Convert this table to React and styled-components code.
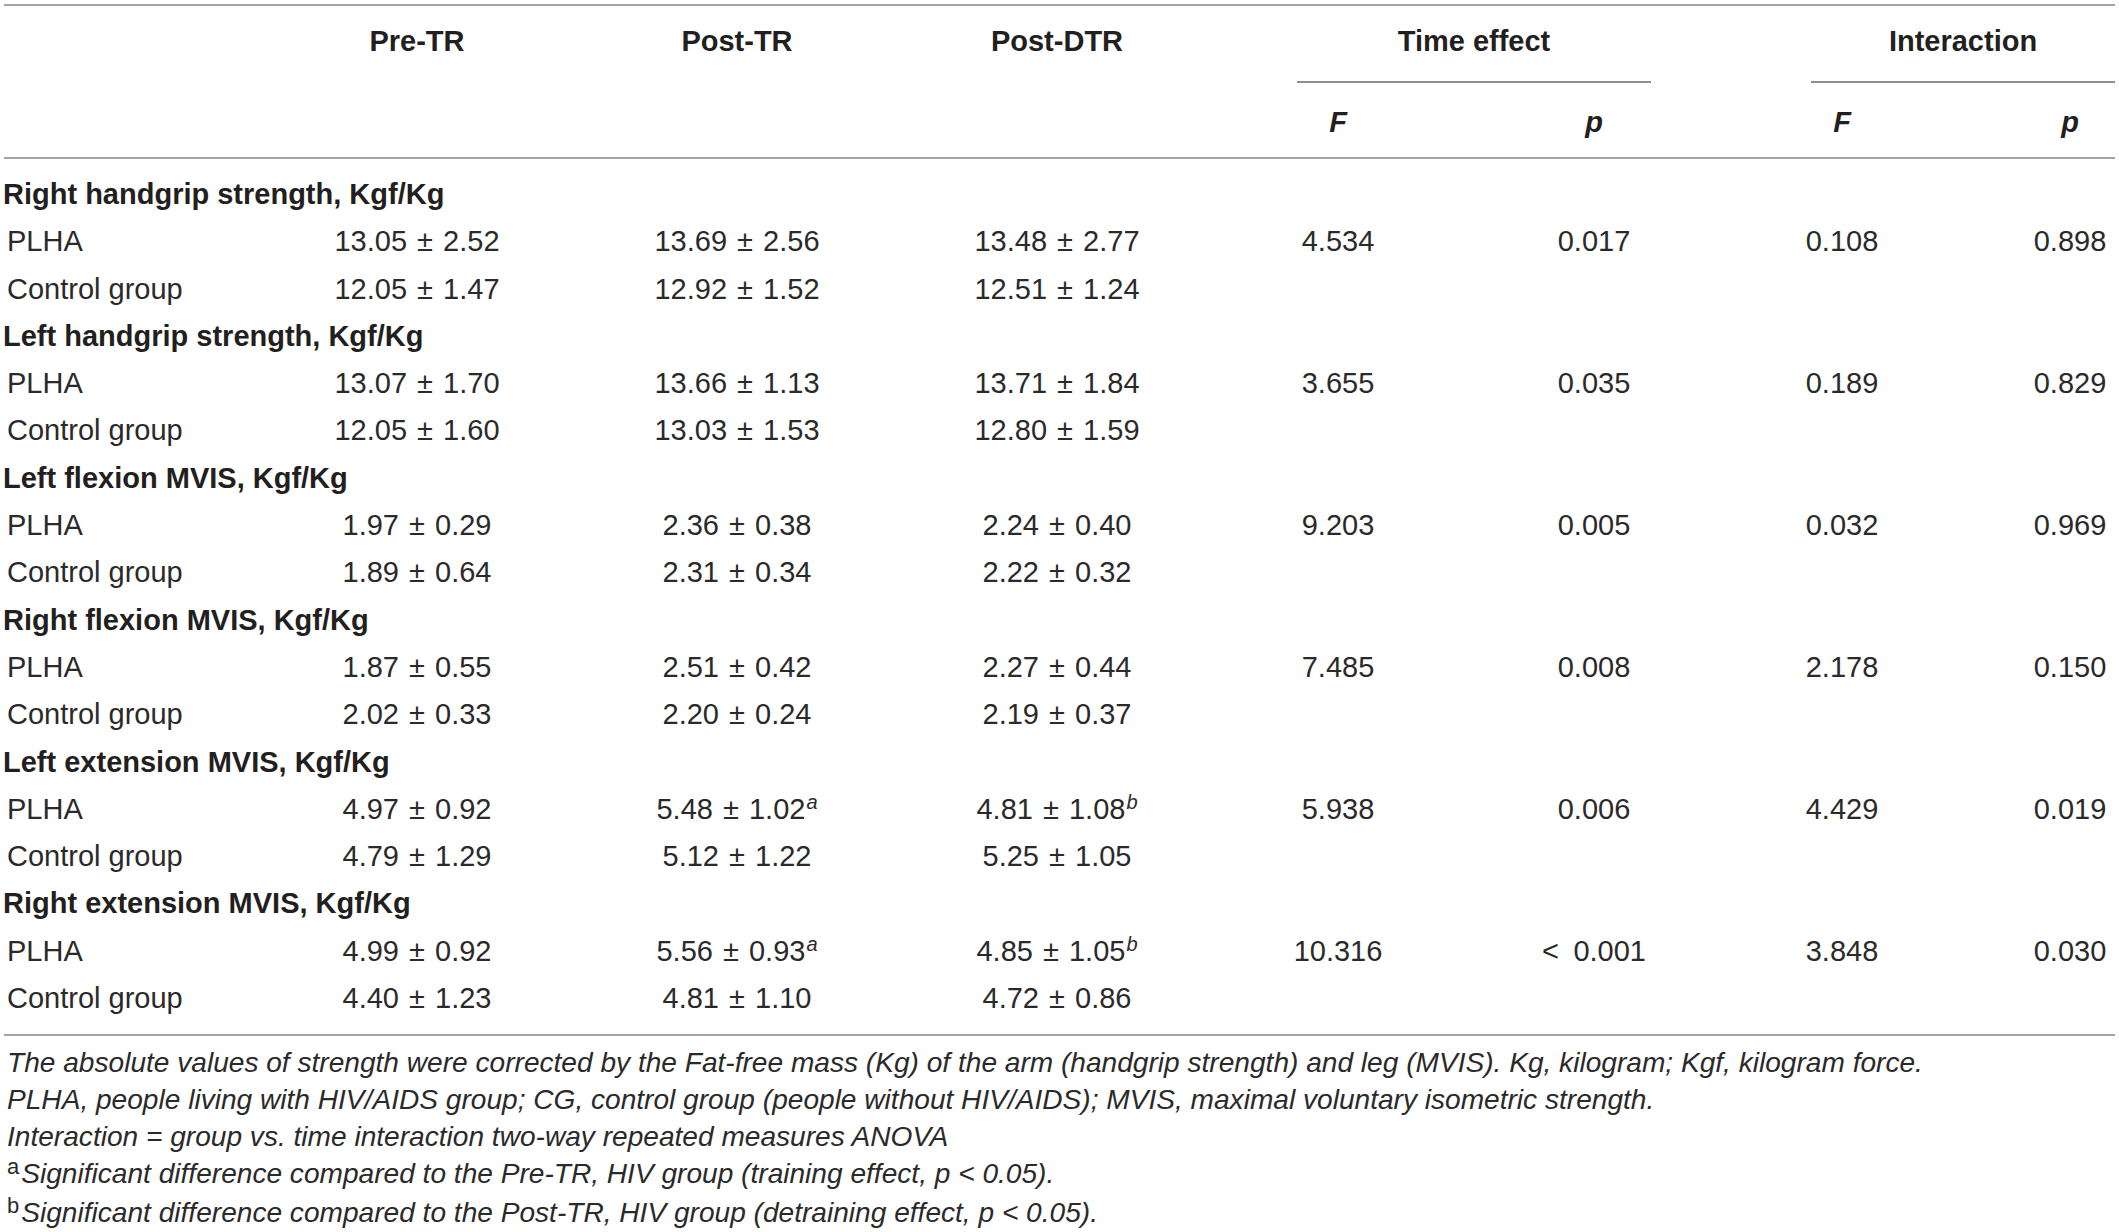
import React from "react";
import styled, { createGlobalStyle } from "styled-components";

const COLS = "257px 320px 320px 320px 242px 270px 226px 164px";

const GlobalStyle = createGlobalStyle`
  html, body {
    margin: 0;
    padding: 0;
    background: #ffffff;
  }
  body {
    font-family: "Liberation Sans", Arial, Helvetica, sans-serif;
    color: #2b2a2a;
  }
`;

const Page = styled.div`
  width: 2119px;
  padding-top: 4px;
`;

const Rule = styled.div`
  height: 2px;
  margin: 0 4px;
  background: #a3a3a3;
`;

const Head = styled.div`
  display: grid;
  grid-template-columns: ${COLS};
  grid-template-rows: 77px 74px;
  font-size: 29px;
  line-height: 32px;
  font-weight: 700;
  color: #231f20;
`;

const ColTitle = styled.div`
  grid-column: ${(p) => p.$col};
  grid-row: 1 / span 2;
  padding-top: 19px;
  text-align: center;
`;

const GroupTitle = styled.div`
  grid-column: ${(p) => p.$col} / span 2;
  grid-row: 1;
  margin: 0 ${(p) => p.$mr}px 0 ${(p) => p.$ml}px;
  padding-top: 19px;
  border-bottom: 2px solid #8f8f8f;
  text-align: center;
`;

const StatTitle = styled.div`
  grid-column: ${(p) => p.$col};
  grid-row: 2;
  padding-top: 23px;
  padding-left: ${(p) => p.$pad || 0}px;
  text-align: center;
  font-style: italic;
`;

const Body = styled.div`
  display: grid;
  grid-template-columns: ${COLS};
  grid-auto-rows: 47.3px;
  padding: 12px 0 11.6px;
  font-size: 29px;
  line-height: 47.3px;
`;

const SectionTitle = styled.div`
  grid-column: 1 / -1;
  padding-left: 3px;
  font-weight: 700;
  color: #231f20;
  white-space: nowrap;
`;

const Label = styled.div`
  padding-left: 7px;
  white-space: nowrap;
`;

const Value = styled.div`
  padding-left: ${(p) => p.$pad || 0}px;
  text-align: center;
  white-space: nowrap;
  word-spacing: 2px;
`;

const Sup = styled.sup`
  font-size: 20px;
  font-style: italic;
  line-height: 0;
  vertical-align: 0;
  position: relative;
  top: -10px;
  margin-left: 1px;
`;

const Notes = styled.div`
  padding: 8px 0 0 7px;
  font-size: 28.1px;
  line-height: 37px;
  font-style: italic;
`;

const NoteLine = styled.div`
  white-space: nowrap;
`;

const NoteMark = styled.span`
  font-style: normal;
  font-size: 22px;
  position: relative;
  top: -9px;
  margin-right: 2px;
`;

const sections = [
  {
    title: "Right handgrip strength, Kgf/Kg",
    rows: [
      ["PLHA", "13.05 ± 2.52", "13.69 ± 2.56", "13.48 ± 2.77", "4.534", "0.017", "0.108", "0.898"],
      ["Control group", "12.05 ± 1.47", "12.92 ± 1.52", "12.51 ± 1.24"],
    ],
  },
  {
    title: "Left handgrip strength, Kgf/Kg",
    rows: [
      ["PLHA", "13.07 ± 1.70", "13.66 ± 1.13", "13.71 ± 1.84", "3.655", "0.035", "0.189", "0.829"],
      ["Control group", "12.05 ± 1.60", "13.03 ± 1.53", "12.80 ± 1.59"],
    ],
  },
  {
    title: "Left flexion MVIS, Kgf/Kg",
    rows: [
      ["PLHA", "1.97 ± 0.29", "2.36 ± 0.38", "2.24 ± 0.40", "9.203", "0.005", "0.032", "0.969"],
      ["Control group", "1.89 ± 0.64", "2.31 ± 0.34", "2.22 ± 0.32"],
    ],
  },
  {
    title: "Right flexion MVIS, Kgf/Kg",
    rows: [
      ["PLHA", "1.87 ± 0.55", "2.51 ± 0.42", "2.27 ± 0.44", "7.485", "0.008", "2.178", "0.150"],
      ["Control group", "2.02 ± 0.33", "2.20 ± 0.24", "2.19 ± 0.37"],
    ],
  },
  {
    title: "Left extension MVIS, Kgf/Kg",
    rows: [
      ["PLHA", "4.97 ± 0.92", ["5.48 ± 1.02", "a"], ["4.81 ± 1.08", "b"], "5.938", "0.006", "4.429", "0.019"],
      ["Control group", "4.79 ± 1.29", "5.12 ± 1.22", "5.25 ± 1.05"],
    ],
  },
  {
    title: "Right extension MVIS, Kgf/Kg",
    rows: [
      ["PLHA", "4.99 ± 0.92", ["5.56 ± 0.93", "a"], ["4.85 ± 1.05", "b"], "10.316", "<\u20020.001", "3.848", "0.030"],
      ["Control group", "4.40 ± 1.23", "4.81 ± 1.10", "4.72 ± 0.86"],
    ],
  },
];

// last column sits off-centre, nudged right
const pads = [0, 0, 0, 0, 0, 0, 66];

function Cell({ value, idx }) {
  if (Array.isArray(value)) {
    return (
      <Value $pad={pads[idx]}>
        {value[0]}
        <Sup>{value[1]}</Sup>
      </Value>
    );
  }
  return <Value $pad={pads[idx]}>{value}</Value>;
}

function Row({ cells }) {
  const [label, ...values] = cells;
  const filled = [...values, ...Array(7 - values.length).fill("")];
  return (
    <>
      <Label>{label}</Label>
      {filled.map((v, i) => (
        <Cell key={i} value={v} idx={i} />
      ))}
    </>
  );
}

export default function App() {
  return (
    <Page>
      <GlobalStyle />
      <Rule />
      <Head>
        <ColTitle $col={2}>Pre-TR</ColTitle>
        <ColTitle $col={3}>Post-TR</ColTitle>
        <ColTitle $col={4}>Post-DTR</ColTitle>
        <GroupTitle $col={5} $ml={80} $mr={78}>Time effect</GroupTitle>
        <GroupTitle $col={7} $ml={82} $mr={4}>Interaction</GroupTitle>
        <StatTitle $col={5}>F</StatTitle>
        <StatTitle $col={6}>p</StatTitle>
        <StatTitle $col={7}>F</StatTitle>
        <StatTitle $col={8} $pad={66}>p</StatTitle>
      </Head>
      <Rule />
      <Body>
        {sections.map((s) => (
          <React.Fragment key={s.title}>
            <SectionTitle>{s.title}</SectionTitle>
            {s.rows.map((r) => (
              <Row key={r[0]} cells={r} />
            ))}
          </React.Fragment>
        ))}
      </Body>
      <Rule />
      <Notes>
        <NoteLine>
          The absolute values of strength were corrected by the Fat-free mass (Kg) of the arm (handgrip strength) and leg (MVIS). Kg, kilogram; Kgf, kilogram force.
        </NoteLine>
        <NoteLine>
          PLHA, people living with HIV/AIDS group; CG, control group (people without HIV/AIDS); MVIS, maximal voluntary isometric strength.
        </NoteLine>
        <NoteLine>Interaction = group vs. time interaction two-way repeated measures ANOVA</NoteLine>
        <NoteLine>
          <NoteMark>a</NoteMark>Significant difference compared to the Pre-TR, HIV group (training effect, p &lt; 0.05).
        </NoteLine>
        <NoteLine>
          <NoteMark>b</NoteMark>Significant difference compared to the Post-TR, HIV group (detraining effect, p &lt; 0.05).
        </NoteLine>
      </Notes>
    </Page>
  );
}
